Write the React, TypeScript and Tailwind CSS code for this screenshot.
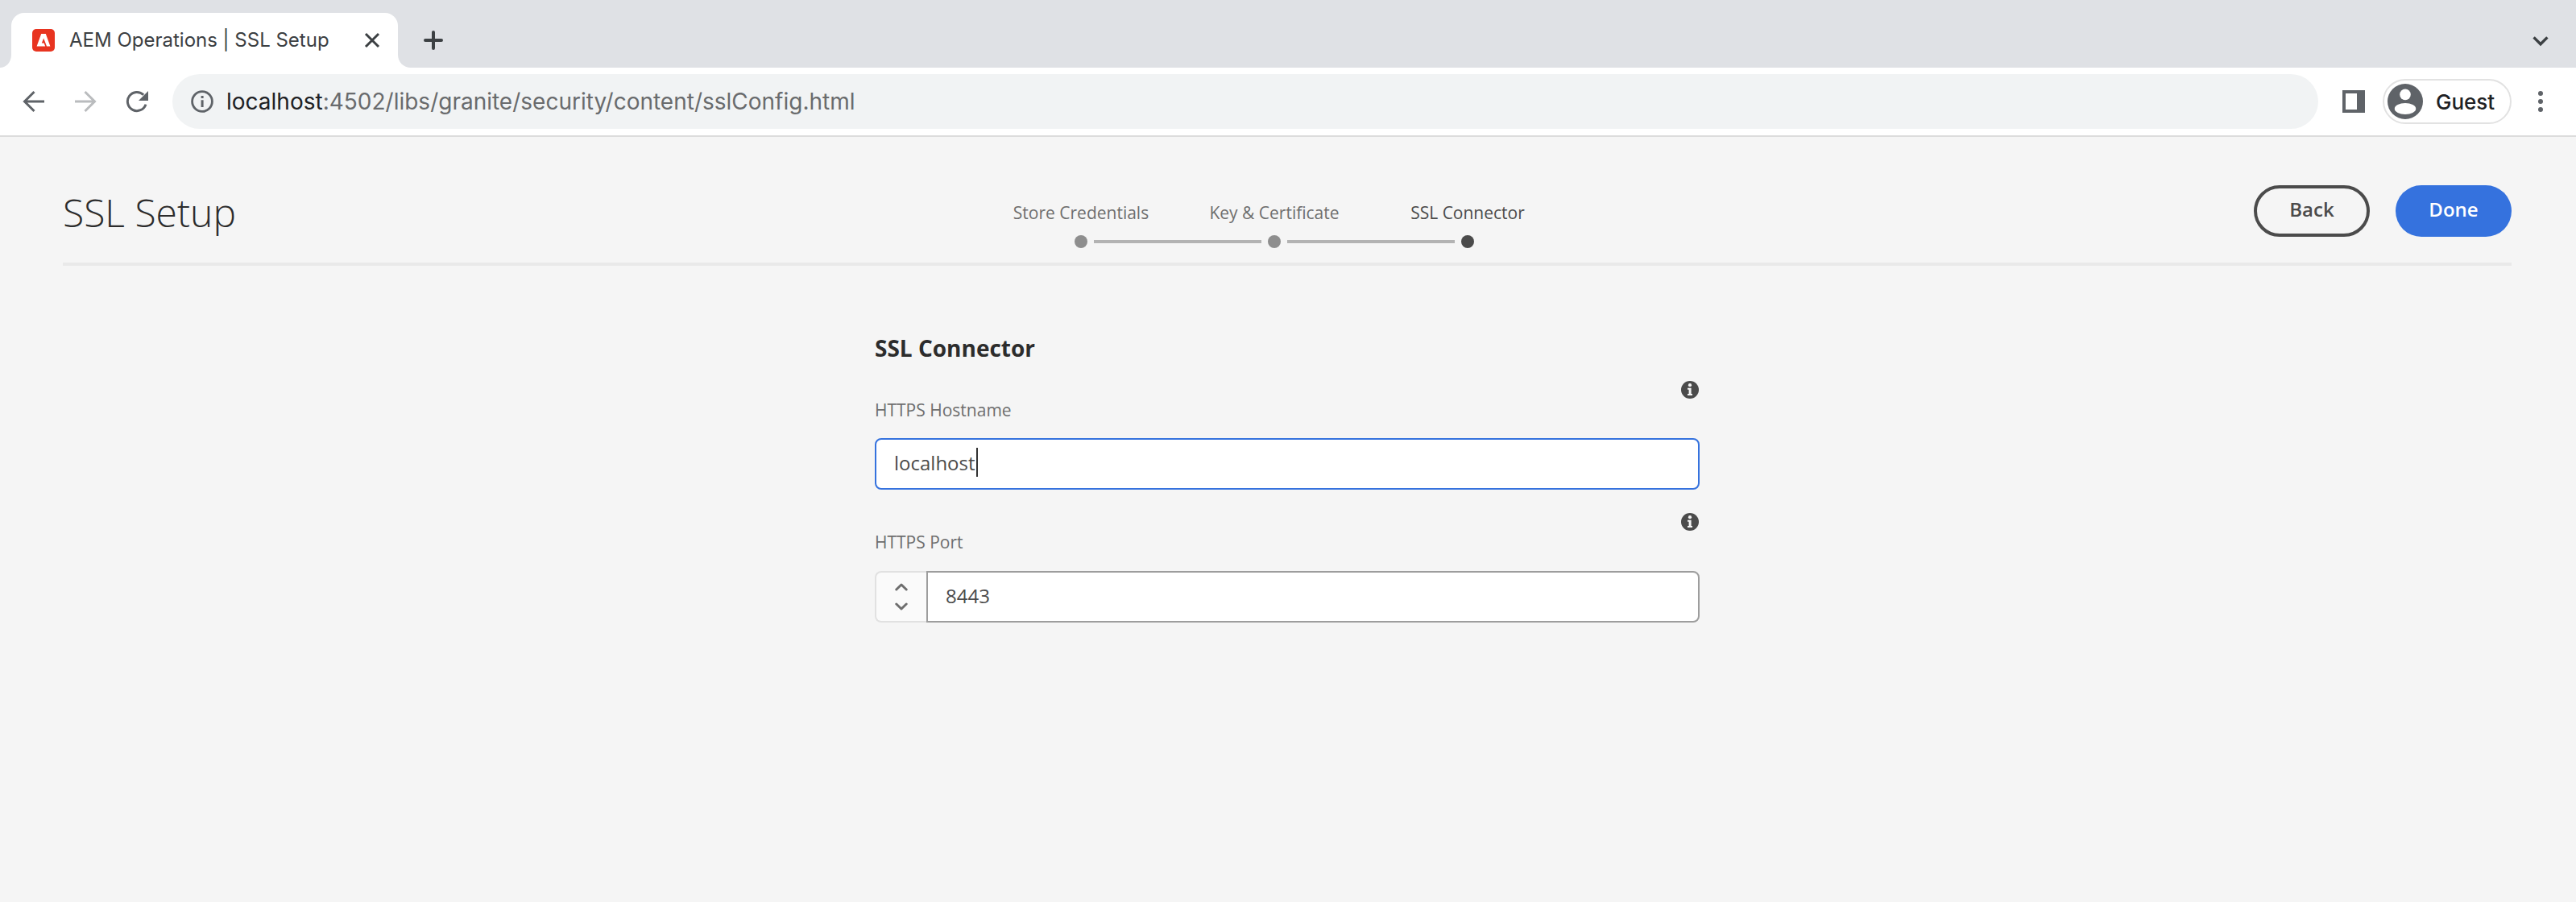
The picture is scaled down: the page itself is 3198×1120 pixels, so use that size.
import React, { useState } from 'react';

const steps = [
  { label: 'Store Credentials', active: false },
  { label: 'Key & Certificate', active: false },
  { label: 'SSL Connector', active: true },
];

function InfoIcon() {
  return (
    <button type="button" aria-label="More information" className="block">
      <svg width="22" height="22" viewBox="0 0 22 22">
        <circle cx="11" cy="11" r="11" fill="#4b4b4b" />
        <circle cx="11" cy="5.2" r="2.1" fill="#f5f5f5" />
        <path d="M8 8.8h4.600v7.200H14v2H8v-2h1.600v-5.200H8z" fill="#f5f5f5" />
      </svg>
    </button>
  );
}

function TabStrip() {
  return (
    <div className="flex h-[84px] items-end justify-between bg-[#dfe1e5]">
      <div className="flex items-end">
        <svg width="14" height="16" viewBox="0 0 14 16" className="block">
          <path d="M14 0v16H0C8 16 14 9 14 0z" fill="#fff" />
        </svg>
        <div className="flex h-[68px] w-[480px] items-center rounded-t-2xl bg-white pr-[22px] pl-[26px]">
          <svg width="28" height="28" viewBox="0 0 28 28" className="shrink-0">
            <rect width="28" height="28" rx="5" fill="#e83420" />
            <path d="M11.200 6h5.600L22.400 21.600h-4.400L14.200 11.400l-2.400 6h2.800l1.600 4.200H5.600z" fill="#fff" />
          </svg>
          <span className="ml-[18px] flex-1 text-2xl whitespace-nowrap text-[#3c4043]">AEM Operations | SSL Setup</span>
          <button type="button" aria-label="Close tab">
            <svg width="20" height="20" viewBox="0 0 20 20" fill="none" stroke="#3c4043" strokeWidth="3">
              <path d="M2 2l16 16M18 2L2 18" />
            </svg>
          </button>
        </div>
        <svg width="16" height="16" viewBox="0 0 16 16" className="block">
          <path d="M0 0v16h16C7 16 0 9 0 0z" fill="#fff" />
        </svg>
        <button type="button" aria-label="New tab" className="mb-[22px] ml-4">
          <svg width="24" height="24" viewBox="0 0 24 24" fill="none" stroke="#3c4043" strokeWidth="4" strokeLinecap="round">
            <path d="M12 2v20M2 12h20" />
          </svg>
        </button>
      </div>
      <button type="button" aria-label="Search tabs" className="mr-[34px] mb-[26px]">
        <svg width="20" height="14" viewBox="0 0 20 14" fill="none" stroke="#3c4043" strokeWidth="3.4">
          <path d="M1.600 2.400L10 10.800l8.400-8.400" />
        </svg>
      </button>
    </div>
  );
}

function Toolbar() {
  return (
    <div className="flex h-[86px] items-center border-b-2 border-[#dcdcdc] bg-white pr-[41px] pl-7">
      <div className="flex gap-9">
        <button type="button" aria-label="Back to previous page">
          <svg width="28" height="28" viewBox="0 0 28 28" fill="none" stroke="#5f6368" strokeWidth="3">
            <path d="M27 14H3M14.500 2L2.500 14l12 12" />
          </svg>
        </button>
        <button type="button" aria-label="Forward">
          <svg width="28" height="28" viewBox="0 0 28 28" fill="none" stroke="#babcbe" strokeWidth="3">
            <path d="M1 14h24M13.500 2l12 12-12 12" />
          </svg>
        </button>
        <button type="button" aria-label="Reload">
          <svg width="28" height="28" viewBox="0 0 28 28">
            <path d="M25 17.600A11.600 11.600 0 1 1 22.200 5.800" fill="none" stroke="#5f6368" strokeWidth="3" />
            <path d="M28 1v12H16z" fill="#5f6368" />
          </svg>
        </button>
      </div>
      <div className="ml-[30px] flex h-[68px] flex-1 items-center rounded-full bg-[#f1f3f4] pl-[23px]">
        <svg width="28" height="28" viewBox="0 0 28 28">
          <circle cx="14" cy="14" r="12.400" fill="none" stroke="#5f6368" strokeWidth="2.800" />
          <path d="M12.600 7h3v3h-3zM12.600 12.200h3v8.800h-3z" fill="#5f6368" />
        </svg>
        <div className="ml-4 text-[28px] whitespace-nowrap text-[#696b6d]">
          <span className="text-[#202124]">localhost</span>:4502/libs/granite/security/content/sslConfig.html
        </div>
      </div>
      <button type="button" aria-label="Side panel" className="ml-[30px]">
        <svg width="28" height="28" viewBox="0 0 28 28">
          <path d="M0 0h28v28H0zM4 4v20h14V4z" fill="#5f6368" fillRule="evenodd" />
        </svg>
      </button>
      <button type="button" className="ml-[22px] flex h-14 w-40 items-center rounded-full border-2 border-[#e2e2e2] pl-1">
        <svg width="44" height="44" viewBox="0 0 44 44">
          <circle cx="22" cy="22" r="22" fill="#5f6368" />
          <circle cx="22" cy="13.400" r="6.800" fill="#fff" />
          <ellipse cx="22" cy="31" rx="13.200" ry="7" fill="#fff" />
        </svg>
        <span className="ml-4 text-[26px] font-medium text-[#202124]">Guest</span>
      </button>
      <button type="button" aria-label="Menu" className="ml-[33px]">
        <svg width="6" height="26" viewBox="0 0 6 26" fill="#5f6368">
          <circle cx="3" cy="3" r="3" />
          <circle cx="3" cy="13" r="3" />
          <circle cx="3" cy="23" r="3" />
        </svg>
      </button>
    </div>
  );
}

function Wizard() {
  return (
    <ol className="grid grid-cols-3 pt-5">
      {steps.map((step, i) => (
        <li key={step.label} className="w-60">
          <div className={step.active ? 'text-center text-[21px] leading-7 whitespace-nowrap text-[#4b4b4b]' : 'text-center text-[21px] leading-7 whitespace-nowrap text-[#6e6e6e]'}>
            {step.label}
          </div>
          <div className="mt-3.5 flex items-center">
            <span className={i === 0 ? 'h-1 flex-1' : 'h-1 flex-1 bg-[#b3b3b3]'} />
            <span className={step.active ? 'mx-2 size-4 rounded-full bg-[#4b4b4b]' : 'mx-2 size-4 rounded-full bg-[#8e8e8e]'} />
            <span className={i === steps.length - 1 ? 'h-1 flex-1' : 'h-1 flex-1 bg-[#b3b3b3]'} />
          </div>
        </li>
      ))}
    </ol>
  );
}

function StepChevron({ up }: { up: boolean }) {
  return (
    <svg width="16" height="10" viewBox="0 0 16 10" fill="none" stroke="#6e6e6e" strokeWidth="3" strokeLinecap="round" strokeLinejoin="round" className="block">
      <path d={up ? 'M1.800 8L8 2l6.200 6' : 'M1.800 2L8 8l6.200-6'} />
    </svg>
  );
}

export default function App() {
  const [host, setHost] = useState('localhost');
  const [port, setPort] = useState('8443');
  const bump = (n: number) => setPort(String(Number(port) + n));

  return (
    <div className="min-h-screen bg-[#f5f5f5] font-['Inter',sans-serif]">
      <TabStrip />
      <Toolbar />
      <div className="pr-20 pl-[78px] font-['Open_Sans',sans-serif]">
        <header className="grid h-40 grid-cols-[1fr_auto_1fr] items-start border-b-4 border-[#e9e9e9] pt-[60px]">
          <h1 className="text-5xl leading-[68px] font-light text-[#2c2c2c]">SSL Setup</h1>
          <div className="pr-8">
            <Wizard />
          </div>
          <div className="flex justify-end gap-8">
            <button type="button" className="h-16 w-36 rounded-full border-4 border-[#4b4b4b] pb-1 text-2xl font-semibold text-[#4b4b4b]">Back</button>
            <button type="button" className="h-16 w-36 rounded-full bg-[#3572de] pb-1 text-2xl font-semibold text-white">Done</button>
          </div>
        </header>
        <main className="mx-auto w-full max-w-5xl pt-[82px]">
          <h2 className="text-[28px] leading-10 font-bold text-[#2c2c2c]">SSL Connector</h2>
          <div className="mt-[21px] flex justify-end pr-[1px]">
            <InfoIcon />
          </div>
          <label htmlFor="host" className="block text-[21px] leading-7 text-[#6e6e6e]">HTTPS Hostname</label>
          <div className="relative mt-[21px]">
            <input id="host" value={host} onChange={(e) => setHost(e.target.value)} className="block h-16 w-full rounded-lg border-2 border-[#3572de] bg-white px-[22px] pb-1 text-2xl text-[#4b4b4b] outline-none" />
            <span className="absolute top-3 left-[126px] h-9 w-0.5 bg-[#323232]" />
          </div>
          <div className="mt-[29px] flex justify-end pr-[1px]">
            <InfoIcon />
          </div>
          <label htmlFor="port" className="block text-[21px] leading-7 text-[#6e6e6e]">HTTPS Port</label>
          <div className="mt-[22px] flex h-16">
            <div className="flex w-16 flex-col items-center justify-center gap-3.5 rounded-l-lg border-2 border-r-0 border-[#e1e1e1] bg-[#fafafa]">
              <button type="button" aria-label="Increase port" onClick={() => bump(1)}>
                <StepChevron up />
              </button>
              <button type="button" aria-label="Decrease port" onClick={() => bump(-1)}>
                <StepChevron up={false} />
              </button>
            </div>
            <input id="port" value={port} onChange={(e) => setPort(e.target.value)} className="h-16 flex-1 rounded-r-lg border-2 border-[#9d9d9d] bg-white px-[22px] pb-1 text-2xl text-[#4b4b4b] outline-none" />
          </div>
        </main>
      </div>
    </div>
  );
}
